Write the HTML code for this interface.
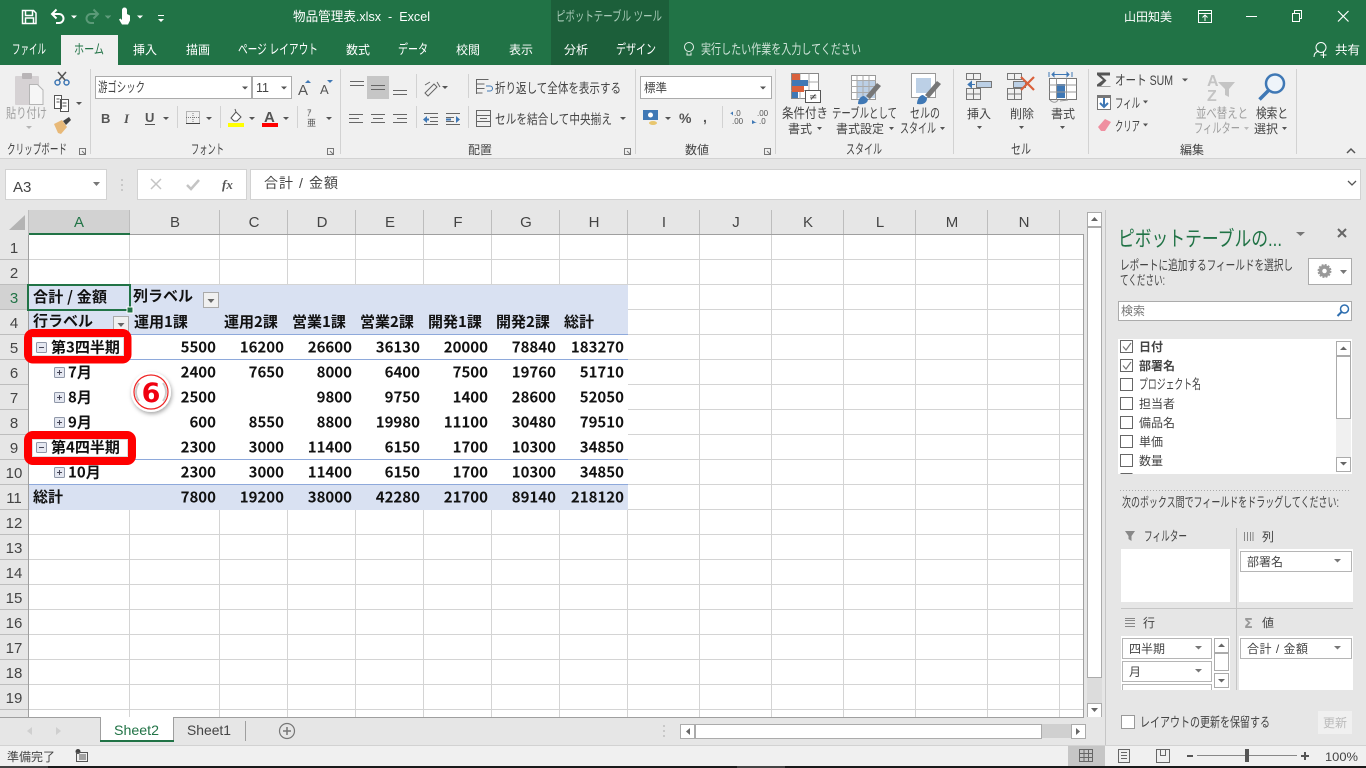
<!DOCTYPE html>
<html lang="ja"><head><meta charset="utf-8"><title>物品管理表.xlsx - Excel</title>
<style>
html,body{margin:0;padding:0;background:#e6e6e6;overflow:hidden}
svg{display:block}
text{white-space:pre}
.t{font:12px "Liberation Sans","Noto Sans CJK JP",sans-serif;fill:#444}
.k{font-size:13.5px}
.w{fill:#fff}
.g{fill:#a0a0a0}
.b{font:bold 15px "Noto Sans CJK JP",sans-serif;fill:#111}
.n{font:bold 15px "Noto Sans CJK JP",sans-serif;fill:#111;text-anchor:end}
.h{font:15px "Liberation Sans","Noto Sans CJK JP",sans-serif;fill:#444;text-anchor:middle}
</style></head><body>
<svg width="1366" height="768" viewBox="0 0 1366 768" xmlns="http://www.w3.org/2000/svg">
<defs><filter id="sh" x="-30%" y="-30%" width="160%" height="160%"><feDropShadow dx="1" dy="2" stdDeviation="2" flood-color="#000" flood-opacity=".35"/></filter></defs>
<rect width="1366" height="768" fill="#e6e6e6"/>
<!-- title bar -->
<rect width="1366" height="65" fill="#217346"/>
<rect x="551" width="118" height="65" fill="#1c5f3a"/>
<rect x="61" y="35" width="57" height="30" fill="#f0f0f0"/>
<g fill="none" stroke="#fff" stroke-width="1.5">
<path d="M22.5 10.5h11l2.5 2.5v10.5h-13.5z"/><path d="M25.5 11v4.5h7V11M25.5 23v-5h8v5"/>
<path d="M53 14h6a4.5 4.5 0 0 1 0 9h-3" stroke-width="2"/><path d="M56.5 9.500l-4.500 4.500 4.500 4.500" stroke-width="2"/>
<g stroke="#5b9a78"><path d="M97 14h-6a4.500 4.500 0 0 0 0 9h3" stroke-width="2"/><path d="M93.500 9.500l4.500 4.500-4.500 4.500" stroke-width="2"/></g>
</g>
<path d="M71 15.500h6l-3 3zM105 15.500h6l-3 3z" fill="#fff"/><path d="M105 15.500h6l-3 3z" fill="#5b9a78"/>
<path d="M122 10a2.500 2.500 0 0 1 5 0v4l3 1.500v5l-2 4h-6l-3-5 1.500-1 1.500 1.500z" fill="#fff"/>
<path d="M137 15.500h6l-3 3zM158 15h6v1h-6zM158 19h6l-3 3z" fill="#fff"/>
<text class="t w" x="293" y="21" style="font-size:13px" textLength="137" lengthAdjust="spacingAndGlyphs">物品管理表.xlsx  -  Excel</text>
<text class="t k" x="556" y="21" style="fill:#a9cbb8" textLength="106" lengthAdjust="spacingAndGlyphs">ピボットテーブル ツール</text>
<text class="t w" x="1124" y="21" textLength="48" lengthAdjust="spacingAndGlyphs">山田知美</text>
<g fill="none" stroke="#fff">
<path d="M1198.500 10.500h13v12h-13zM1198.500 13.500h13M1205 21v-6M1202.500 17.500l2.500-2.500 2.500 2.500"/>
<path d="M1246 16.500h11"/>
<path d="M1292.500 13.500h7v8h-7zM1294.500 13v-2.500h7v8h-2"/>
<path d="M1338 11l10.500 10.500M1348.500 11l-10.500 10.500" stroke-width="1.200"/>
</g>
<g class="tabs">
<text class="t k w" x="12" y="54" textLength="34" lengthAdjust="spacingAndGlyphs">ファイル</text>
<text class="t k" x="74" y="54" style="fill:#217346" textLength="30" lengthAdjust="spacingAndGlyphs">ホーム</text>
<text class="t w" x="133" y="54" textLength="24" lengthAdjust="spacingAndGlyphs">挿入</text>
<text class="t w" x="186" y="54" textLength="24" lengthAdjust="spacingAndGlyphs">描画</text>
<text class="t k w" x="238" y="54" textLength="80" lengthAdjust="spacingAndGlyphs">ページ レイアウト</text>
<text class="t w" x="346" y="54" textLength="24" lengthAdjust="spacingAndGlyphs">数式</text>
<text class="t k w" x="398" y="54" textLength="30" lengthAdjust="spacingAndGlyphs">データ</text>
<text class="t w" x="456" y="54" textLength="24" lengthAdjust="spacingAndGlyphs">校閲</text>
<text class="t w" x="509" y="54" textLength="24" lengthAdjust="spacingAndGlyphs">表示</text>
<text class="t w" x="564" y="54" textLength="24" lengthAdjust="spacingAndGlyphs">分析</text>
<text class="t k w" x="616" y="54" textLength="40" lengthAdjust="spacingAndGlyphs">デザイン</text>
<text class="t k" x="701" y="54" style="fill:#cfe3d8" textLength="160" lengthAdjust="spacingAndGlyphs">実行したい作業を入力してください</text>
<text class="t w" x="1335" y="54" textLength="25" lengthAdjust="spacingAndGlyphs">共有</text>
</g>
<g fill="none" stroke="#e6efe9"><circle cx="689" cy="47" r="4.500"/><path d="M687 52.500v2.500h4v-2.500"/></g>
<g fill="none" stroke="#fff"><circle cx="1321" cy="47.500" r="5"/><path d="M1314 57c0-4 3-5.500 5-6M1323.500 52v6M1320.500 55h6"/></g>
<!-- ribbon -->
<rect y="65" width="1366" height="93" fill="#f0f0f0"/>
<rect y="158" width="1366" height="1" fill="#d2d2d2"/>
<rect x="61" y="65" width="57" height="1" fill="#f0f0f0"/>
<path d="M90.500 69V154M340.500 69V154M635.500 69V154M775.500 69V154M953.500 69V154M1088.500 69V154M1296.500 69V154" stroke="#d2d2d2"/>
<!-- clipboard -->
<rect x="15" y="76" width="24" height="29" rx="1" fill="#d6d2d4"/>
<rect x="22" y="73" width="10" height="6" rx="1" fill="#b9b5b7"/>
<path d="M29.500 84.500h8l5.500 5.500v14.500h-13.500z" fill="#f6f6f6" stroke="#b5b5b5"/>
<text class="t k g" x="6" y="118" textLength="41" lengthAdjust="spacingAndGlyphs">貼り付け</text>
<path d="M26 126h6l-3 3z" fill="#b5b5b5"/>
<g fill="none" stroke="#3f78b5" stroke-width="1.500"><circle cx="57.500" cy="82.500" r="2.500"/><circle cx="66.500" cy="82.500" r="2.500"/></g>
<path d="M58 72l7 8M66 72l-7 8" stroke="#555" stroke-width="1.500" fill="none"/>
<path d="M54.500 95.500h7v13h-7zM60.500 99.500h8v12h-8zM56.500 99h3M56.500 102h3M62.500 103h4M62.500 106h4" fill="#fff" stroke="#555"/>
<path d="M76 102h6l-3 3z" fill="#555"/>
<path d="M54 124l8-4 5 7-6 7-3-1z" fill="#e8b978"/><path d="M63 121l6-4 2 3-5 5z" fill="#444"/>
<text class="t k" x="7" y="154" textLength="60" lengthAdjust="spacingAndGlyphs">クリップボード</text>
<path d="M79.500 148.500h6v6h-6zM82 151l3 3" fill="none" stroke="#777"/>
<!-- font -->
<rect x="95.500" y="76.500" width="156" height="22" fill="#fff" stroke="#ababab"/>
<rect x="252.500" y="76.500" width="39" height="22" fill="#fff" stroke="#ababab"/>
<text class="t k" x="98" y="92" textLength="47" lengthAdjust="spacingAndGlyphs">游ゴシック</text>
<text class="t" x="256" y="92" style="font-size:12.500px">11</text>
<path d="M242 86.500h6l-3 3zM281 86.500h6l-3 3z" fill="#555"/>
<text class="t" x="298" y="95" style="font-size:15px;fill:#555">A</text><path d="M305 83l3-3 3 3z" fill="#3f78b5"/>
<text class="t" x="320" y="94" style="font-size:13px;fill:#555">A</text><path d="M327 80h6l-3 3z" fill="#3f78b5"/>
<text x="101" y="123" style="font:bold 13px 'Liberation Sans',sans-serif;fill:#555">B</text>
<text x="124" y="123" style="font:italic bold 13px 'Liberation Serif',serif;fill:#555">I</text>
<text x="145" y="122" style="font:bold 13px 'Liberation Sans',sans-serif;fill:#555">U</text><rect x="145" y="124" width="10" height="1" fill="#555"/>
<path d="M163 117h6l-3 3z" fill="#555"/>
<path d="M177.500 106V128M220.500 106V128M297.500 106V128M416.500 74V98M416.500 106V128M468.500 74V98M468.500 106V128" stroke="#d2d2d2"/>
<path d="M186.500 111.500h13v12h-13z" fill="none" stroke="#777" stroke-dasharray="1 1"/><path d="M193 111v13M186 117.500h14" stroke="#777" stroke-dasharray="1 1" fill="none"/><rect x="186" y="123" width="14" height="1" fill="#444"/>
<path d="M206 117h6l-3 3z" fill="#555"/>
<path d="M231 118l5-6 5 5-4 4h-3zM236 112l-1-3" fill="#fff" stroke="#555"/><rect x="228" y="123" width="16" height="4" fill="#ff0"/>
<path d="M249 117h6l-3 3z" fill="#555"/>
<text x="264" y="122" style="font:bold 15px 'Liberation Sans',sans-serif;fill:#555">A</text><rect x="262" y="123" width="16" height="4" fill="#f00"/>
<path d="M283 117h6l-3 3z" fill="#555"/>
<text x="307" y="116" style="font:9px 'Liberation Sans','Noto Sans CJK JP',sans-serif;fill:#555">ｱ</text><text x="307" y="126" style="font:9px 'Liberation Sans','Noto Sans CJK JP',sans-serif;fill:#555">亜</text>
<path d="M326 117h6l-3 3z" fill="#555"/>
<text class="t k" x="191" y="154" textLength="33" lengthAdjust="spacingAndGlyphs">フォント</text>
<path d="M327.500 148.500h6v6h-6zM330 151l3 3" fill="none" stroke="#777"/>
<!-- alignment -->
<rect x="367" y="76" width="22" height="23" fill="#c6c6c6"/>
<path d="M350 81.500h14M350 85.500h14M371 85.500h14M371 89.500h14M393 90.500h14M393 94.500h14" stroke="#666" fill="none"/>
<path d="M425 93l9-9 3 3-9 9zM425 85l5-3M437 82l3 5" fill="none" stroke="#666"/>
<path d="M442 86h6l-3 3z" fill="#555"/>
<path d="M349 114.500h14M349 118.500h10M349 122.500h14M371 114.500h14M373 118.500h10M371 122.500h14M393 114.500h14M397 118.500h10M393 122.500h14" stroke="#666" fill="none"/>
<path d="M424 113.500h14M430 117.500h8M430 121.500h8M424 124.500h14M446 113.500h14M446 117.500h8M446 121.500h8M446 124.500h14" stroke="#666" fill="none"/>
<path d="M429 119.500l-5 0M446 119.500h5" stroke="#3f78b5" stroke-width="2"/><path d="M427 116l-4 3.500 4 3.500zM456 116l4 3.500-4 3.500z" fill="#3f78b5"/>
<path d="M476.500 79.500h12M476.500 84h8M476.500 88.500h8M476.500 93h6M476.500 79v15" stroke="#666" fill="none"/><path d="M486 86h4a2 2 0 0 1 0 5h-3" stroke="#3f78b5" fill="none"/>
<text class="t k" x="495" y="93" textLength="126" lengthAdjust="spacingAndGlyphs">折り返して全体を表示する</text>
<path d="M476.500 110.500h14v16h-14zM476.500 115.500h14M476.500 121.500h14M480 118.500h7" stroke="#666" fill="none"/>
<text class="t k" x="495" y="124" textLength="117" lengthAdjust="spacingAndGlyphs">セルを結合して中央揃え</text>
<path d="M620 117h6l-3 3z" fill="#555"/>
<text class="t" x="468" y="154" textLength="24" lengthAdjust="spacingAndGlyphs">配置</text>
<path d="M624.500 148.500h6v6h-6zM627 151l3 3" fill="none" stroke="#777"/>
<!-- number -->
<rect x="640.500" y="76.500" width="131" height="22" fill="#fff" stroke="#ababab"/>
<text class="t" x="644" y="92" textLength="23" lengthAdjust="spacingAndGlyphs">標準</text>
<path d="M760 86.500h6l-3 3z" fill="#555"/>
<rect x="643" y="110" width="15" height="10" fill="#3f78b5"/><circle cx="650.500" cy="115" r="2.500" fill="#fff"/><ellipse cx="653" cy="123" rx="4" ry="2" fill="#e8c66e"/>
<path d="M665 117h6l-3 3z" fill="#555"/>
<text x="679" y="123" style="font:bold 14px 'Liberation Sans',sans-serif;fill:#555">%</text>
<text x="703" y="122" style="font:bold 14px 'Liberation Sans',sans-serif;fill:#555">,</text>
<path d="M722.500 106V128" stroke="#d2d2d2"/>
<text x="734" y="116" style="font:8px 'Liberation Sans',sans-serif;fill:#555">.0</text><text x="732" y="124" style="font:8px 'Liberation Sans',sans-serif;fill:#555">.00</text>
<text x="757" y="116" style="font:8px 'Liberation Sans',sans-serif;fill:#555">.00</text><text x="759" y="124" style="font:8px 'Liberation Sans',sans-serif;fill:#555">.0</text>
<path d="M731 113.500h-1l3-2v4zM757 122h-2l-3-2v4z" fill="#3f78b5"/>
<text class="t" x="685" y="154" textLength="24" lengthAdjust="spacingAndGlyphs">数値</text>
<path d="M764.500 148.500h6v6h-6zM767 151l3 3" fill="none" stroke="#777"/>
<!-- styles -->
<g fill="#fff" stroke="#888"><rect x="791.500" y="73.500" width="27" height="25"/></g>
<path d="M800 73.500V99M809 73.500V99M791.500 82h27M791.500 90.500h27" stroke="#aaa" fill="none"/>
<rect x="792" y="74" width="8" height="8" fill="#d9603b"/><rect x="792" y="80" width="16" height="6" fill="#3f78b5"/><rect x="792" y="86" width="12" height="6" fill="#d9603b"/><rect x="792" y="92" width="6" height="6" fill="#3f78b5"/>
<rect x="805.500" y="90.500" width="15" height="12" fill="#fff" stroke="#555"/>
<text x="809" y="100" style="font:10px 'DejaVu Sans',sans-serif;fill:#333">≠</text>
<rect x="851.500" y="75.500" width="24" height="24" fill="#fff" stroke="#999"/>
<rect x="857" y="80" width="18" height="18" fill="#bcd0e6"/>
<path d="M857 75.500V99M863 75.500V99M869 75.500V99M851.500 80.500h24M851.500 86.500h24M851.500 92.500h24" stroke="#aaa" fill="none"/>
<path d="M866 96l11-13 4 3-11 13z" fill="#777"/><path d="M858 104c0-5 3-8 6-8l4 3c0 4-4 6-10 5z" fill="#3f78b5"/>
<rect x="911.500" y="73.500" width="24" height="24" fill="#fff" stroke="#999"/>
<rect x="916" y="78" width="15" height="15" fill="#bcd0e6"/>
<path d="M925 95l12-14 4 3-12 14z" fill="#777"/><path d="M917 104c0-5 3-9 6-9l4 3c0 5-4 7-10 6z" fill="#3f78b5"/>
<text class="t k" x="782" y="118" textLength="46" lengthAdjust="spacingAndGlyphs">条件付き</text>
<text class="t" x="788" y="133" textLength="24" lengthAdjust="spacingAndGlyphs">書式</text><path d="M817 127h5l-2.500 3z" fill="#555"/>
<text class="t k" x="832" y="118" textLength="65" lengthAdjust="spacingAndGlyphs">テーブルとして</text>
<text class="t" x="836" y="133" textLength="48" lengthAdjust="spacingAndGlyphs">書式設定</text><path d="M889 127h5l-2.500 3z" fill="#555"/>
<text class="t k" x="910" y="118" textLength="30" lengthAdjust="spacingAndGlyphs">セルの</text>
<text class="t k" x="900" y="133" textLength="36" lengthAdjust="spacingAndGlyphs">スタイル</text><path d="M940 127h5l-2.500 3z" fill="#555"/>
<text class="t k" x="846" y="154" textLength="36" lengthAdjust="spacingAndGlyphs">スタイル</text>
<!-- cells -->
<path d="M966.500 73.500h14v6h-14zM973.500 73.500v6M966.500 88.500h14v11h-14zM973.500 88.500v11M966.500 94h14M976.500 81.500h15v6h-15zM984 81.500v6" fill="none" stroke="#777"/>
<rect x="977" y="82" width="14" height="5" fill="#bcd0e6"/>
<path d="M971 84.500h4M968 84.500l3.500-3v6z" fill="#3f78b5" stroke="#3f78b5"/>
<path d="M1007.500 73.500h14v6h-14zM1014.500 73.500v6M1007.500 88.500h14v11h-14zM1014.500 88.500v11M1007.500 94h14M1013.500 81.500h12v6h-12z" fill="none" stroke="#777"/>
<rect x="1014" y="82" width="11" height="5" fill="#bcd0e6"/>
<path d="M1021 77l13 13M1034 77l-13 13" stroke="#d9603b" stroke-width="2.200"/>
<path d="M1049 72v5M1072 72v5M1052 74.500h17M1052 74.500l2-2v4zM1069 74.500l-2-2v4z" stroke="#3f78b5" fill="none"/>
<rect x="1049.500" y="78.500" width="27" height="21" fill="#fff" stroke="#777"/><rect x="1057" y="84" width="8" height="14" fill="#3f78b5"/>
<path d="M1056.500 78.500v21M1066.500 78.500v21M1049.500 85h27M1049.500 92h27M1050 100c3 3 6 3 8 0M1060 101l8-1" stroke="#999" fill="none"/>
<text class="t" x="967" y="118" textLength="24" lengthAdjust="spacingAndGlyphs">挿入</text><path d="M977 126h5l-2.500 3z" fill="#555"/>
<text class="t" x="1010" y="118" textLength="24" lengthAdjust="spacingAndGlyphs">削除</text><path d="M1019 126h5l-2.500 3z" fill="#555"/>
<text class="t" x="1051" y="118" textLength="24" lengthAdjust="spacingAndGlyphs">書式</text><path d="M1060 126h5l-2.500 3z" fill="#555"/>
<text class="t k" x="1011" y="154" textLength="20" lengthAdjust="spacingAndGlyphs">セル</text>
<!-- edit -->
<path d="M1097 72.500h13v3h-9l5.500 5-5.500 5.500h9.500v-0 0h0v0.500h-13.500v-2l6-4.500-6-5z" fill="#555"/>
<text class="t k" x="1115" y="85" textLength="58" lengthAdjust="spacingAndGlyphs">オート SUM</text><path d="M1182 78.500h6l-3 3z" fill="#555"/>
<rect x="1097.500" y="95.500" width="13" height="14" fill="#fff" stroke="#777"/><rect x="1097" y="95" width="14" height="3" fill="#777"/><path d="M1104 98v8M1100 103l4 4 4-4" stroke="#3f78b5" stroke-width="2" fill="none"/>
<text class="t k" x="1115" y="108" textLength="25" lengthAdjust="spacingAndGlyphs">フィル</text><path d="M1143 100.500h5l-2.500 3z" fill="#555"/>
<path d="M1098 127l7-8 6 3-6 9h-4z" fill="#ef8fa0"/>
<text class="t k" x="1115" y="131" textLength="25" lengthAdjust="spacingAndGlyphs">クリア</text><path d="M1143 123.500h5l-2.500 3z" fill="#555"/>
<text x="1207" y="86" style="font:bold 16px 'Liberation Sans',sans-serif;fill:#c4c4c4">A</text>
<text x="1207" y="101" style="font:bold 16px 'Liberation Sans',sans-serif;fill:#c4c4c4">Z</text>
<path d="M1218 82h17l-6 7v8l-4 -2v-6z" fill="#c4c4c4"/>
<circle cx="1275" cy="83.500" r="9" fill="#eef4fa" stroke="#3f78b5" stroke-width="2.500"/><path d="M1268.500 90.500l-9 9" stroke="#3f78b5" stroke-width="3.500"/>
<text class="t k g" x="1196" y="118" textLength="52" lengthAdjust="spacingAndGlyphs">並べ替えと</text>
<text class="t k g" x="1194" y="133" textLength="46" lengthAdjust="spacingAndGlyphs">フィルター</text><path d="M1244 127h5l-2.500 3z" fill="#bbb"/>
<text class="t k" x="1256" y="118" textLength="32" lengthAdjust="spacingAndGlyphs">検索と</text>
<text class="t" x="1254" y="133" textLength="24" lengthAdjust="spacingAndGlyphs">選択</text><path d="M1282 127h5l-2.500 3z" fill="#555"/>
<text class="t" x="1180" y="154" textLength="24" lengthAdjust="spacingAndGlyphs">編集</text>
<path d="M1347 153l4-4 4 4" fill="none" stroke="#555" stroke-width="1.500"/>
<!-- formula bar -->
<rect x="5.500" y="169.500" width="101" height="30" fill="#fff" stroke="#d2d2d2"/>
<text x="13" y="192" style="font:15px 'Liberation Sans',sans-serif;fill:#444">A3</text>
<path d="M93 182h7l-3.500 4z" fill="#777"/>
<path d="M122 179v2M122 184v2M122 189v2" stroke="#aaa"/>
<rect x="137.500" y="169.500" width="109" height="30" fill="#fff" stroke="#d2d2d2"/>
<rect x="250.500" y="169.500" width="1110" height="30" fill="#fff" stroke="#d2d2d2"/>
<path d="M151 179l10 10M161 179l-10 10" stroke="#c4c4c4" stroke-width="1.500"/>
<path d="M187 185l4 4 8-9" stroke="#c4c4c4" stroke-width="2.500" fill="none"/>
<text x="222" y="189" style="font:italic bold 13px 'Liberation Serif',serif;fill:#555">fx</text>
<text class="t" x="264" y="188" style="font-size:14px;fill:#444" textLength="74" lengthAdjust="spacing">合計 / 金額</text>
<path d="M1348 181l4 4 4-4" fill="none" stroke="#555" stroke-width="1.300"/>
<!-- sheet -->
<rect x="29" y="235" width="1055" height="482" fill="#fff"/>
<path d="M129.500 235V717M219.500 235V717M287.500 235V717M355.500 235V717M423.500 235V717M491.500 235V717M559.500 235V717M627.500 235V717M699.500 235V717M771.500 235V717M843.500 235V717M915.500 235V717M987.500 235V717M1059.500 235V717" stroke="#d4d4d4"/>
<path d="M29 259.500H1084M29 284.500H1084M29 309.500H1084M29 334.500H1084M29 359.500H1084M29 384.500H1084M29 409.500H1084M29 434.500H1084M29 459.500H1084M29 484.500H1084M29 509.500H1084M29 534.500H1084M29 559.500H1084M29 584.500H1084M29 609.500H1084M29 634.500H1084M29 659.500H1084M29 684.500H1084M29 709.500H1084" stroke="#d4d4d4"/>
<rect x="29" y="335" width="599" height="150" fill="#fff"/>
<rect x="29" y="285" width="599" height="50" fill="#d9e1f2"/>
<rect x="29" y="485" width="599" height="25" fill="#d9e1f2"/>
<path d="M29 334.500H628M29 359.500H628M29 459.500H628M29 484.500H628" stroke="#8ea9db"/>
<!-- headers -->
<rect x="0" y="210" width="1085" height="25" fill="#e6e6e6"/>
<rect x="0" y="235" width="28" height="482" fill="#e6e6e6"/>
<rect x="29" y="210" width="101" height="25" fill="#d2d2d2"/>
<rect x="130" y="234" width="955" height="1" fill="#9f9f9f"/>
<rect x="29" y="233" width="101" height="2" fill="#217346"/>
<rect x="0" y="285" width="28" height="25" fill="#d2d2d2"/>
<rect x="28" y="235" width="1" height="482" fill="#9f9f9f"/>
<rect x="1083" y="234" width="1" height="483" fill="#9f9f9f"/>
<path d="M25 215v15H9z" fill="#b4b4b4"/>
<path d="M28.500 210V235M129.500 210V233M219.500 210V234M287.500 210V234M355.500 210V234M423.500 210V234M491.500 210V234M559.500 210V234M627.500 210V234M699.500 210V234M771.500 210V234M843.500 210V234M915.500 210V234M987.500 210V234M1059.500 210V234" stroke="#bdbdbd"/>
<path d="M0 259.500H28M0 284.500H28M0 309.500H28M0 334.500H28M0 359.500H28M0 384.500H28M0 409.500H28M0 434.500H28M0 459.500H28M0 484.500H28M0 509.500H28M0 534.500H28M0 559.500H28M0 584.500H28M0 609.500H28M0 634.500H28M0 659.500H28M0 684.500H28M0 709.500H28" stroke="#bdbdbd"/>
<text class="h" x="79" y="227" style="fill:#217346">A</text><text class="h" x="175" y="227">B</text><text class="h" x="254" y="227">C</text><text class="h" x="322" y="227">D</text><text class="h" x="390" y="227">E</text><text class="h" x="458" y="227">F</text><text class="h" x="526" y="227">G</text><text class="h" x="594" y="227">H</text><text class="h" x="664" y="227">I</text><text class="h" x="736" y="227">J</text><text class="h" x="808" y="227">K</text><text class="h" x="880" y="227">L</text><text class="h" x="952" y="227">M</text><text class="h" x="1024" y="227">N</text>
<text class="h" x="14" y="253">1</text><text class="h" x="14" y="278">2</text><text class="h" x="14" y="303" style="fill:#217346">3</text><text class="h" x="14" y="328">4</text><text class="h" x="14" y="353">5</text><text class="h" x="14" y="378">6</text><text class="h" x="14" y="403">7</text><text class="h" x="14" y="428">8</text><text class="h" x="14" y="453">9</text><text class="h" x="14" y="478">10</text><text class="h" x="14" y="503">11</text><text class="h" x="14" y="528">12</text><text class="h" x="14" y="553">13</text><text class="h" x="14" y="578">14</text><text class="h" x="14" y="603">15</text><text class="h" x="14" y="628">16</text><text class="h" x="14" y="653">17</text><text class="h" x="14" y="678">18</text><text class="h" x="14" y="703">19</text><text class="h" x="14" y="727">20</text>
<!-- pivot text -->
<text class="b" x="33" y="302" textLength="74" lengthAdjust="spacing">合計 / 金額</text>
<text class="b" x="133" y="301">列ラベル</text>
<text class="b" x="33" y="326">行ラベル</text>
<text class="b" x="134" y="327">運用1課</text><text class="b" x="224" y="327">運用2課</text><text class="b" x="292" y="327">営業1課</text><text class="b" x="360" y="327">営業2課</text><text class="b" x="428" y="327">開発1課</text><text class="b" x="496" y="327">開発2課</text><text class="b" x="564" y="327">総計</text>
<rect x="203.500" y="292.500" width="15" height="15" fill="#f0f0f0" stroke="#aaa"/><path d="M207.500 299h7l-3.500 4z" fill="#666"/>
<rect x="113.500" y="316.500" width="15" height="15" fill="#f0f0f0" stroke="#aaa"/><path d="M117.500 323h7l-3.500 4z" fill="#666"/>
<g class="n">
<text class="n" x="216" y="352.500">5500</text><text class="n" x="284" y="352.500">16200</text><text class="n" x="352" y="352.500">26600</text><text class="n" x="420" y="352.500">36130</text><text class="n" x="488" y="352.500">20000</text><text class="n" x="556" y="352.500">78840</text><text class="n" x="624" y="352.500">183270</text>
<text class="n" x="216" y="377.500">2400</text><text class="n" x="284" y="377.500">7650</text><text class="n" x="352" y="377.500">8000</text><text class="n" x="420" y="377.500">6400</text><text class="n" x="488" y="377.500">7500</text><text class="n" x="556" y="377.500">19760</text><text class="n" x="624" y="377.500">51710</text>
<text class="n" x="216" y="402.500">2500</text><text class="n" x="352" y="402.500">9800</text><text class="n" x="420" y="402.500">9750</text><text class="n" x="488" y="402.500">1400</text><text class="n" x="556" y="402.500">28600</text><text class="n" x="624" y="402.500">52050</text>
<text class="n" x="216" y="427.500">600</text><text class="n" x="284" y="427.500">8550</text><text class="n" x="352" y="427.500">8800</text><text class="n" x="420" y="427.500">19980</text><text class="n" x="488" y="427.500">11100</text><text class="n" x="556" y="427.500">30480</text><text class="n" x="624" y="427.500">79510</text>
<text class="n" x="216" y="452.500">2300</text><text class="n" x="284" y="452.500">3000</text><text class="n" x="352" y="452.500">11400</text><text class="n" x="420" y="452.500">6150</text><text class="n" x="488" y="452.500">1700</text><text class="n" x="556" y="452.500">10300</text><text class="n" x="624" y="452.500">34850</text>
<text class="n" x="216" y="477.500">2300</text><text class="n" x="284" y="477.500">3000</text><text class="n" x="352" y="477.500">11400</text><text class="n" x="420" y="477.500">6150</text><text class="n" x="488" y="477.500">1700</text><text class="n" x="556" y="477.500">10300</text><text class="n" x="624" y="477.500">34850</text>
<text class="n" x="216" y="502.500">7800</text><text class="n" x="284" y="502.500">19200</text><text class="n" x="352" y="502.500">38000</text><text class="n" x="420" y="502.500">42280</text><text class="n" x="488" y="502.500">21700</text><text class="n" x="556" y="502.500">89140</text><text class="n" x="624" y="502.500">218120</text>
</g>
<text class="b" x="33" y="502">総計</text>
<!-- selection -->
<rect x="28" y="285" width="102" height="25" fill="none" stroke="#217346" stroke-width="2"/>
<rect x="127" y="307" width="6" height="6" fill="#217346" stroke="#fff"/>
<!-- red boxes -->
<rect x="28" y="333" width="99.500" height="26.500" rx="5" fill="#fff" stroke="#ff0000" stroke-width="8"/>
<rect x="32.500" y="337.500" width="91" height="18" fill="none" stroke="#ddd"/>
<rect x="28" y="435" width="104" height="26" rx="5" fill="#fff" stroke="#ff0000" stroke-width="8"/>
<rect x="32.500" y="439.500" width="95" height="17" fill="none" stroke="#ddd"/>
<text class="b" x="51" y="352.500">第3四半期</text>
<text class="b" x="51" y="452.500">第4四半期</text>
<text class="b" x="68" y="377.500">7月</text>
<text class="b" x="68" y="402.500">8月</text>
<text class="b" x="68" y="427.500">9月</text>
<text class="b" x="68" y="477.500">10月</text>
<g fill="#e4e7f0" stroke="#8f97a8">
<rect x="36.500" y="342.500" width="10" height="10" rx="1"/><rect x="36.500" y="442.500" width="10" height="10" rx="1"/>
<rect x="54.500" y="367.500" width="10" height="10" rx="1"/><rect x="54.500" y="392.500" width="10" height="10" rx="1"/><rect x="54.500" y="417.500" width="10" height="10" rx="1"/><rect x="54.500" y="467.500" width="10" height="10" rx="1"/>
</g>
<path d="M39 347.500h5M39 447.500h5M57 372.500h5M59.500 370v5M57 397.500h5M59.500 395v5M57 422.500h5M59.500 420v5M57 472.500h5M59.500 470v5" stroke="#445"/>
<!-- circled 6 -->
<circle cx="151" cy="392" r="20" fill="#fff" filter="url(#sh)"/>
<circle cx="151" cy="392" r="17" fill="#fff" stroke="#ee2222" stroke-width="1.200"/>
<path d="M163 383a15 15 0 0 1 0 18M139 401a15 15 0 0 1 0-18" stroke="#ccc" stroke-width="2" fill="none"/>
<text x="151" y="402" text-anchor="middle" style="font:bold 27px 'DejaVu Sans',sans-serif;fill:#f00010">6</text>
<!-- v scrollbar -->
<rect x="1084" y="210" width="21" height="507" fill="#e6e6e6"/>
<rect x="1087" y="212" width="15" height="505" fill="#dcdcdc"/>
<rect x="1087.500" y="212.500" width="14" height="14" fill="#fff" stroke="#ababab"/>
<path d="M1091 221h7l-3.500-4z" fill="#666"/>
<rect x="1087.500" y="227.500" width="14" height="450" fill="#fff" stroke="#ababab"/>
<rect x="1087.500" y="703.500" width="14" height="14" fill="#fff" stroke="#ababab"/>
<path d="M1091 708h7l-3.500 4z" fill="#666"/>
<!-- tabs bar -->
<rect y="717" width="1105" height="28" fill="#e6e6e6"/>
<rect y="717" width="1084" height="1" fill="#9f9f9f"/>
<path d="M32 727v8l-5-4zM56 727v8l5-4z" fill="#cfcfcf"/>
<rect x="100" y="717" width="74" height="25" fill="#fff"/>
<path d="M100.500 717V742M173.500 717V742" stroke="#9f9f9f"/>
<rect x="100" y="740" width="74" height="2" fill="#217346"/>
<text x="114" y="735" style="font:14px 'Liberation Sans',sans-serif;fill:#217346" textLength="45" lengthAdjust="spacingAndGlyphs">Sheet2</text>
<text x="187" y="735" style="font:14px 'Liberation Sans',sans-serif;fill:#444" textLength="44" lengthAdjust="spacingAndGlyphs">Sheet1</text>
<path d="M245.500 721V741" stroke="#9f9f9f"/>
<circle cx="287" cy="731" r="7.500" fill="none" stroke="#777" stroke-width="1.200"/><path d="M283 731h8M287 727v8" stroke="#777" stroke-width="1.500"/>
<path d="M664 725v2M664 730v2M664 735v2" stroke="#aaa"/>
<rect x="680" y="724" width="405" height="14" fill="#d0d0d0"/>
<rect x="680.500" y="724.500" width="14" height="14" fill="#fff" stroke="#ababab"/><path d="M690 728v7l-4-3.500z" fill="#666"/>
<rect x="695.500" y="724.500" width="346" height="14" fill="#fff" stroke="#ababab"/>
<rect x="1071.500" y="724.500" width="14" height="14" fill="#fff" stroke="#ababab"/><path d="M1076 728v7l4-3.500z" fill="#666"/>
<!-- panel -->
<rect x="1106" y="210" width="260" height="535" fill="#e6e6e6"/>
<rect x="1105" y="210" width="1" height="535" fill="#c6c6c6"/>
<text x="1118" y="246" style="font:21px 'Liberation Sans','Noto Sans CJK JP',sans-serif;fill:#217346" textLength="164" lengthAdjust="spacingAndGlyphs">ピボットテーブルの...</text>
<path d="M1296 232h9l-4.500 4z" fill="#777"/>
<path d="M1338 229l8 8M1346 229l-8 8" stroke="#666" stroke-width="2"/>
<text class="t k" x="1120" y="270" textLength="173" lengthAdjust="spacingAndGlyphs">レポートに追加するフィールドを選択し</text>
<text class="t k" x="1120" y="285" textLength="45" lengthAdjust="spacingAndGlyphs">てください:</text>
<rect x="1308.500" y="258.500" width="43" height="26" fill="#fff" stroke="#ababab"/>
<circle cx="1324.500" cy="271" r="4" fill="none" stroke="#999" stroke-width="3.500"/><circle cx="1324.500" cy="271" r="6.200" fill="none" stroke="#999" stroke-width="1.500" stroke-dasharray="2 1.250"/>
<path d="M1340 270h7l-3.500 4z" fill="#777"/>
<rect x="1118.500" y="301.500" width="233" height="19" fill="#fff" stroke="#ababab"/>
<text class="t" x="1121" y="315" style="fill:#777" textLength="24" lengthAdjust="spacingAndGlyphs">検索</text>
<circle cx="1344.500" cy="309" r="4" fill="none" stroke="#2f6fb0" stroke-width="1.500"/><path d="M1341.500 312l-4 4" stroke="#2f6fb0" stroke-width="2"/>
<rect x="1118" y="339" width="234" height="135" fill="#fff"/>
<g fill="#fff" stroke="#666">
<rect x="1120.500" y="340.500" width="12" height="12"/><rect x="1120.500" y="359.500" width="12" height="12"/><rect x="1120.500" y="378.500" width="12" height="12"/><rect x="1120.500" y="397.500" width="12" height="12"/><rect x="1120.500" y="416.500" width="12" height="12"/><rect x="1120.500" y="435.500" width="12" height="12"/><rect x="1120.500" y="454.500" width="12" height="12"/><path d="M1120.500 473.500h12" />
</g>
<path d="M1123 346.500l3 3.500 5-7M1123 365.500l3 3.500 5-7" fill="none" stroke="#777" stroke-width="1.200"/>
<text class="t" x="1139" y="351" style="font-weight:bold" textLength="24" lengthAdjust="spacingAndGlyphs">日付</text>
<text class="t" x="1139" y="370" style="font-weight:bold" textLength="36" lengthAdjust="spacingAndGlyphs">部署名</text>
<text class="t k" x="1139" y="389" textLength="62" lengthAdjust="spacingAndGlyphs">プロジェクト名</text>
<text class="t" x="1139" y="408" textLength="36" lengthAdjust="spacingAndGlyphs">担当者</text>
<text class="t" x="1139" y="427" textLength="36" lengthAdjust="spacingAndGlyphs">備品名</text>
<text class="t" x="1139" y="446" textLength="24" lengthAdjust="spacingAndGlyphs">単価</text>
<text class="t" x="1139" y="465" textLength="24" lengthAdjust="spacingAndGlyphs">数量</text>
<rect x="1336" y="341" width="15" height="131" fill="#f0f0f0"/>
<rect x="1336.500" y="341.500" width="14" height="14" fill="#fff" stroke="#ababab"/><path d="M1340 350h7l-3.500-3.500z" fill="#666"/>
<rect x="1336.500" y="356.500" width="14" height="62" fill="#fff" stroke="#ababab"/>
<rect x="1336.500" y="457.500" width="14" height="14" fill="#fff" stroke="#ababab"/><path d="M1340 462h7l-3.500 3.500z" fill="#666"/>
<path d="M1120 490.500H1350" stroke="#aaa" stroke-dasharray="1 2"/>
<text class="t k" x="1122" y="507" textLength="217" lengthAdjust="spacingAndGlyphs">次のボックス間でフィールドをドラッグしてください:</text>
<path d="M1125 531h10l-3.500 5v5l-3-2v-3z" fill="#888"/>
<text class="t k" x="1144" y="541" textLength="43" lengthAdjust="spacingAndGlyphs">フィルター</text>
<path d="M1244.500 532v9M1247.500 532v9M1250.500 532v9M1253 532v9" stroke="#888"/>
<text class="t" x="1262" y="541" textLength="12" lengthAdjust="spacingAndGlyphs">列</text>
<rect x="1121" y="549" width="109" height="53" fill="#fff"/>
<rect x="1239" y="549" width="114" height="53" fill="#fff"/>
<rect x="1121" y="608" width="232" height="1" fill="#c6c6c6"/>
<rect x="1236" y="528" width="1" height="162" fill="#c6c6c6"/>
<rect x="1240.500" y="551.500" width="111" height="20" fill="#fff" stroke="#b5b5b5"/>
<text class="t" x="1247" y="566" textLength="36" lengthAdjust="spacingAndGlyphs">部署名</text>
<path d="M1334 559h7l-3.500 3.500z" fill="#777"/>
<path d="M1125 620.500h10M1125 623.500h10M1125 626.500h10M1125 618.500h10" stroke="#888"/>
<text class="t" x="1143" y="627" textLength="12" lengthAdjust="spacingAndGlyphs">行</text>
<text x="1244" y="628" style="font:bold 13px 'DejaVu Sans',sans-serif;fill:#999">Σ</text>
<text class="t" x="1262" y="627" textLength="12" lengthAdjust="spacingAndGlyphs">値</text>
<rect x="1121" y="636" width="109" height="54" fill="#fff"/>
<rect x="1239" y="636" width="114" height="54" fill="#fff"/>
<rect x="1122.500" y="638.500" width="89" height="20" fill="#fff" stroke="#b5b5b5"/>
<text class="t" x="1129" y="653" textLength="36" lengthAdjust="spacingAndGlyphs">四半期</text>
<path d="M1195 646h7l-3.500 3.500z" fill="#777"/>
<rect x="1122.500" y="661.500" width="89" height="20" fill="#fff" stroke="#b5b5b5"/>
<text class="t" x="1129" y="676" textLength="12" lengthAdjust="spacingAndGlyphs">月</text>
<path d="M1195 669h7l-3.500 3.500z" fill="#777"/>
<path d="M1122.500 690v-5.500h89v5.500" fill="none" stroke="#b5b5b5"/>
<rect x="1214.500" y="638.500" width="14" height="14" fill="#fff" stroke="#ababab"/><path d="M1218 647h7l-3.500-3.500z" fill="#666"/>
<rect x="1214.500" y="653.500" width="14" height="17" fill="#fff" stroke="#ababab"/>
<rect x="1214.500" y="673.500" width="14" height="14" fill="#fff" stroke="#ababab"/><path d="M1218 679h7l-3.500 3.500z" fill="#666"/>
<rect x="1240.500" y="638.500" width="111" height="20" fill="#fff" stroke="#b5b5b5"/>
<text class="t" x="1247" y="653" textLength="61" lengthAdjust="spacing">合計 / 金額</text>
<path d="M1334 646h7l-3.500 3.500z" fill="#777"/>
<rect x="1121.500" y="715.500" width="13" height="13" fill="#fff" stroke="#999"/>
<text class="t k" x="1140" y="727" textLength="130" lengthAdjust="spacingAndGlyphs">レイアウトの更新を保留する</text>
<rect x="1318" y="711" width="34" height="23" fill="#f0f0f0"/>
<text class="t" x="1323" y="727" style="fill:#bbb" textLength="24" lengthAdjust="spacingAndGlyphs">更新</text>
<!-- status bar -->
<rect y="745" width="1366" height="21" fill="#f0f0f0"/>
<rect y="745" width="1366" height="1" fill="#d2d2d2"/>
<rect x="1068" y="746" width="37" height="20" fill="#c6c6c6"/>
<text class="t" x="7" y="761" textLength="48" lengthAdjust="spacingAndGlyphs">準備完了</text>
<circle cx="78" cy="751.500" r="2.500" fill="#444"/><path d="M76.500 752.500h11v9h-11zM79 755h7M79 757h7M79 759h7" fill="none" stroke="#555"/>
<path d="M1079.500 749.500h13v12h-13zM1084 749.500v12M1088.500 749.500v12M1079.500 753.500h13M1079.500 757.500h13" fill="none" stroke="#666"/>
<path d="M1118.500 749.500h11v13h-11zM1121 752.500h6M1121 755.500h6M1121 758.500h6" fill="none" stroke="#666"/>
<path d="M1156.500 749.500h13v13h-13zM1160.500 749.500v6h5v-6" fill="none" stroke="#666"/>
<rect x="1187" y="755" width="6" height="2" fill="#555"/>
<rect x="1197" y="755" width="100" height="1" fill="#888"/>
<rect x="1245" y="749" width="4" height="13" fill="#555"/>
<path d="M1301 756h8M1305 752v8" stroke="#555" stroke-width="2"/>
<text class="t" x="1325" y="761" textLength="33" lengthAdjust="spacingAndGlyphs">100%</text>
<rect y="766" width="1366" height="2" fill="#1a1a1a"/>
<rect y="766" width="48" height="2" fill="#444"/>
<rect x="737" y="766" width="48" height="2" fill="#444"/>
</svg>
</body></html>
